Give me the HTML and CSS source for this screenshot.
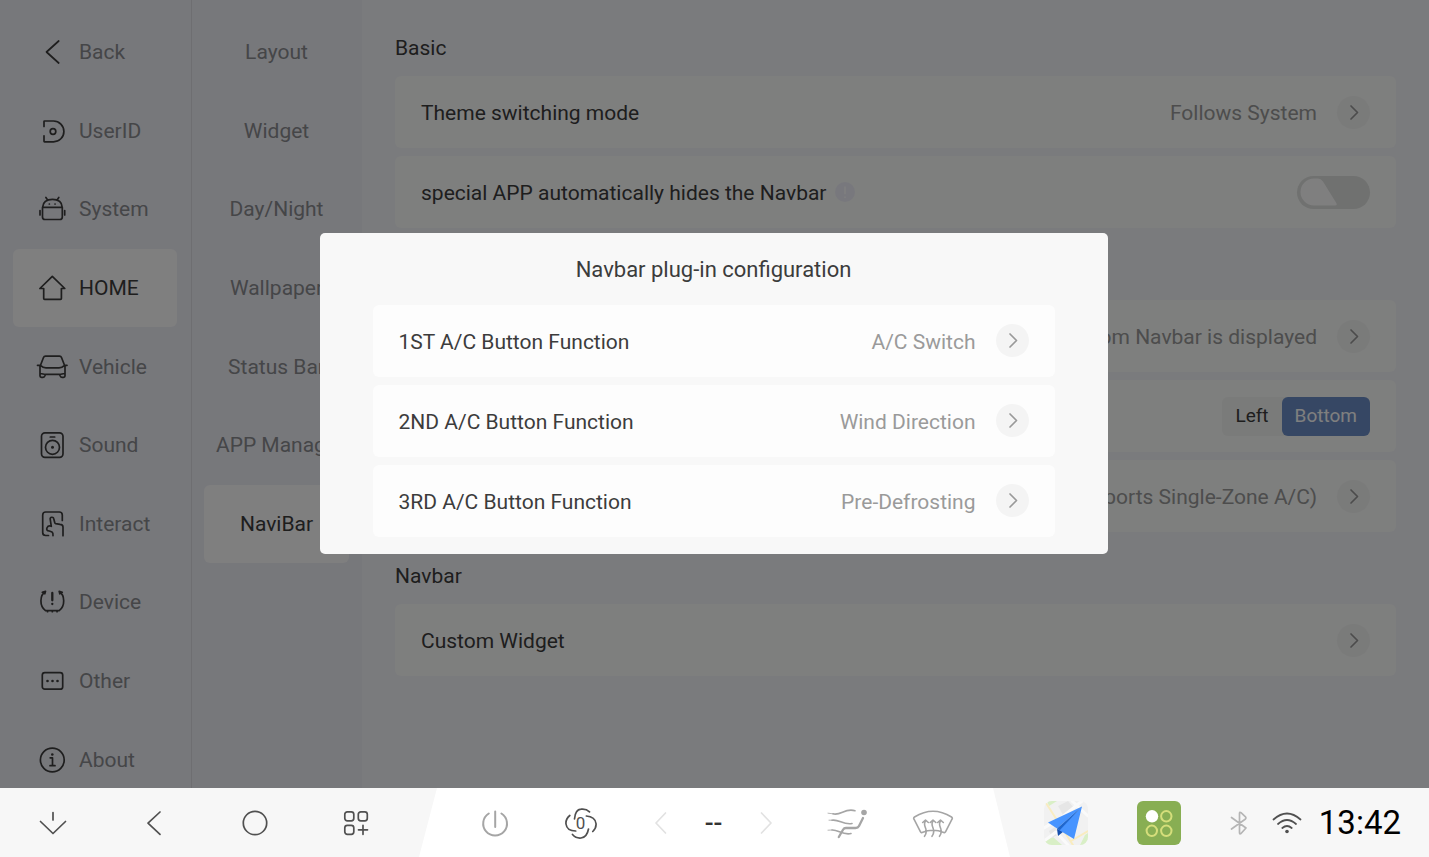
FILE: index.html
```
<!DOCTYPE html>
<html lang="en">
  <head>
    <meta charset="UTF-8" />
    <meta name="viewport" content="width=device-width, initial-scale=1.0" />
    <title>Settings</title>
    <link rel="stylesheet" href="styles.css">
  </head>
  <body>
    <div class="screen">
      <nav class="menu main-menu">
        <a class="item" href="#">
          <svg class="icon" viewBox="0 0 32 32"><path d="M22.7 5 10.5 16 22.7 27" /></svg>
          Back
        </a>
        <a class="item" href="#">
          <svg class="icon" viewBox="0 0 32 32"><path d="M8 11.500V6.500Q8 6 8.500 6H17.500a10.400 10.400 0 0 1 0 20.800H8.500Q8 26.800 8 26.300V20.800" /><circle cx="17" cy="16.500" r="2.800" /></svg>
          UserID
        </a>
        <a class="item" href="#">
          <svg class="icon" viewBox="0 0 32 32"><path d="M6.600 14.300C7 9 11 6.400 16.500 6.400S26 9 26.200 14.300M6.500 14.300H26.300V24a2.500 2.500 0 0 1-2.500 2.500H9A2.500 2.500 0 0 1 6.500 24ZM9.900 4.500 11.800 7.200M22.800 4.500 20.900 7.200M4 17.500V22M28.700 17.500V22" /><path d="M13.300 11h.1M19 11h.1" /></svg>
          System
        </a>
        <a class="item active" href="#">
          <svg class="icon" viewBox="0 0 32 32"><path d="M16.300 4.300 28.800 16.500H25.400V26.500Q25.400 27.400 24.500 27.400H8.600Q7.700 27.400 7.700 26.500V16.500H3.900Z" /></svg>
          HOME
        </a>
        <a class="item" href="#">
          <svg class="icon" viewBox="0 0 32 32"><path d="M1.500 14.300H4.500L7.500 6.500Q8 5.200 9.500 5.200H23.500Q25 5.200 25.500 6.500L28.500 14.300H31M4.500 14.300Q7 16.800 10 16.800H23Q26 16.800 28.500 14.300M4 15V25Q4 26.300 5.500 26.300H7Q8.500 26.300 9 24.500L9.500 23.300H23.500L24 24.500Q24.500 26.300 26 26.300H27.500Q29 26.300 29 25V15M4.500 22.500 9.500 23.500M28.500 22.500 23.500 23.500" /></svg>
          Vehicle
        </a>
        <a class="item" href="#">
          <svg class="icon" viewBox="0 0 32 32"><rect x="5.500" y="3.800" width="21.500" height="24.500" rx="3.500" /><circle cx="16.500" cy="18.300" r="7" /><path d="M14.300 8H18.700" /><circle class="dot" cx="16.500" cy="18.300" r="1.500" /></svg>
          Sound
        </a>
        <a class="item" href="#">
          <svg class="icon" viewBox="0 0 32 32"><path d="M26.300 12.500V7Q26.300 4 23.300 4H9.700Q6.700 4 6.700 7V24.500Q6.700 27.500 9.700 27.500H12.500M27 27.700V19Q27 16.500 24 16.300L19.700 15.600Q18.800 15.400 18.700 14.500L17.700 10.500C17.300 8.600 13.900 8.900 14.200 11.200L15.300 18.300Q12.200 17.200 11 19.800T13.300 23L16 24Q17.300 24.800 17 27.700" /></svg>
          Interact
        </a>
        <a class="item" href="#">
          <svg class="icon" viewBox="0 0 32 32"><path d="M9.500 5.300C3.600 9.500 3.200 19.800 9.500 24.700H23.200C29.400 19.800 29 9.500 23.200 5.300M6.300 6.200 9.500 5.300 8.800 7.800M26.300 6.200 23.200 5.300 23.800 7.800M11.500 25.700h.1M16.300 25.700h.1M21 25.700h.1" /><path class="bold" d="M16.300 7V14.300M16.300 17.800V18" /></svg>
          Device
        </a>
        <a class="item" href="#">
          <svg class="icon" viewBox="0 0 32 32"><rect x="6.300" y="7.600" width="20.400" height="16.600" rx="2.500" /><g class="dot"><circle cx="11.500" cy="16" r="1.300" /><circle cx="16.500" cy="16" r="1.300" /><circle cx="21.500" cy="16" r="1.300" /></g></svg>
          Other
        </a>
        <a class="item" href="#">
          <svg class="icon" viewBox="0 0 32 32"><circle cx="16.300" cy="16" r="11.900" /><path d="M14.200 13.800H16.500V21.500M14 21.700H19" /><circle class="dot" cx="16.300" cy="10.500" r="1.300" /></svg>
          About
        </a>
      </nav>

      <nav class="menu sub-menu">
        <a class="item" href="#">Layout</a>
        <a class="item" href="#">Widget</a>
        <a class="item" href="#">Day/Night</a>
        <a class="item" href="#">Wallpaper</a>
        <a class="item" href="#">Status Bar</a>
        <a class="item" href="#">APP Manage</a>
        <a class="item active" href="#">NaviBar</a>
      </nav>

      <main class="content">
        <h2>Basic</h2>
        <div class="rows">
          <div class="row">
            <span>Theme switching mode</span>
            <span class="value">Follows System</span>
            <button class="arrow" aria-label="Theme switching mode"><svg viewBox="0 0 33 33"><path d="M14 10 20.500 16.500 14 23" /></svg></button>
          </div>
          <div class="row">
            <label for="hide-navbar">special APP automatically hides the Navbar</label>
            <svg class="info" viewBox="0 0 20 20"><circle cx="10" cy="10" r="10" /><path d="M10 5V11.500M10 15V15.200" /></svg>
            <input class="toggle" type="checkbox" id="hide-navbar" />
          </div>
        </div>

        <div class="rows untitled">
          <div class="row">
            <span class="value">Bottom Navbar is displayed</span>
            <button class="arrow" aria-label="Navbar display"><svg viewBox="0 0 33 33"><path d="M14 10 20.500 16.500 14 23" /></svg></button>
          </div>
          <div class="row">
            <div class="segment">
              <button>Left</button>
              <button class="active">Bottom</button>
            </div>
          </div>
          <div class="row">
            <span class="value">(Supports Single-Zone A/C)</span>
            <button class="arrow" aria-label="Navbar plug-in"><svg viewBox="0 0 33 33"><path d="M14 10 20.500 16.500 14 23" /></svg></button>
          </div>
        </div>

        <h2>Navbar</h2>
        <div class="rows">
          <div class="row">
            <span>Custom Widget</span>
            <button class="arrow" aria-label="Custom Widget"><svg viewBox="0 0 33 33"><path d="M14 10 20.500 16.500 14 23" /></svg></button>
          </div>
        </div>
      </main>

      <div class="overlay">
        <div class="modal" role="dialog" aria-labelledby="modal-title">
          <h1 id="modal-title">Navbar plug-in configuration</h1>
          <div class="rows">
            <div class="row">
              <span>1ST A/C Button Function</span>
              <span class="value">A/C Switch</span>
              <button class="arrow" aria-label="1ST A/C Button Function"><svg viewBox="0 0 33 33"><path d="M14 10 20.500 16.500 14 23" /></svg></button>
            </div>
            <div class="row">
              <span>2ND A/C Button Function</span>
              <span class="value">Wind Direction</span>
              <button class="arrow" aria-label="2ND A/C Button Function"><svg viewBox="0 0 33 33"><path d="M14 10 20.500 16.500 14 23" /></svg></button>
            </div>
            <div class="row">
              <span>3RD A/C Button Function</span>
              <span class="value">Pre-Defrosting</span>
              <button class="arrow" aria-label="3RD A/C Button Function"><svg viewBox="0 0 33 33"><path d="M14 10 20.500 16.500 14 23" /></svg></button>
            </div>
          </div>
        </div>
      </div>
    </div>

    <footer class="navbar">
      <div class="keys">
        <button aria-label="Hide"><svg class="icon" viewBox="0 0 32 32"><path d="M16 5.500V13M3.500 14.500 16 26.500 28.500 14.500" /></svg></button>
        <button aria-label="Back"><svg class="icon" viewBox="0 0 32 32"><path d="M22 5 10 16.200 22 27.300" /></svg></button>
        <button aria-label="Home"><svg class="icon" viewBox="0 0 32 32"><circle cx="16" cy="16" r="11.700" /></svg></button>
        <button aria-label="Apps"><svg class="icon" viewBox="0 0 32 32"><rect x="4.800" y="4.800" width="9" height="9" rx="2.500" /><rect x="18.300" y="4.800" width="9" height="9" rx="2.500" /><rect x="4.800" y="18.300" width="9" height="9" rx="2.500" /><path d="M23 18.300V27.300M18.500 22.800H27.500" /></svg></button>
      </div>

      <div class="climate">
        <button class="gray" aria-label="A/C power"><svg class="icon" viewBox="0 0 32 32"><path d="M16.200 4.500V20M9.800 6.500A11.900 11.900 0 1 0 22.400 6.500" /></svg></button>
        <button class="fan" aria-label="Fan speed">
          <svg class="icon" viewBox="0 0 32 32"><path d="M9.500 12C10 5.500 12 2.500 16 2.200Q21 1.500 24.500 4.800M21.300 9C27.500 9.500 30.500 12.500 31 16.500Q31.500 21 27.800 24.500M23.500 22C22.500 27.500 20 30.500 16 31Q11 31.500 7.500 27.500M10.700 24C4.500 24 1.500 21 1 17Q.500 12 4.800 8.500" /></svg>
          <span>0</span>
        </button>
        <div class="stepper">
          <button aria-label="Decrease temperature"><svg class="icon" viewBox="0 0 32 32"><path d="M20.500 6 11 16 20.500 26" /></svg></button>
          <output>--</output>
          <button aria-label="Increase temperature"><svg class="icon" viewBox="0 0 32 32"><path d="M11.500 6 21 16 11.500 26" /></svg></button>
        </div>
        <button class="gray" aria-label="Wind direction"><svg class="wide-icon" viewBox="0 0 44 32"><path class="bold" d="M38 11 34 19Q33 21 30.500 21H21Q19 21 18 22.800L13.800 30" /><path class="mid" d="M8 6.800C16 9 20 .500 30 3.800M7 13.200C14 12 18 18 27 16.500M7 23C13 22.500 18 28.500 26 26.500" /><path class="thin" d="M3 6.200 8 6.800M4 13.200H7M3 23.200 7 23" /><circle class="dot" cx="39" cy="5.500" r="2.800" /></svg></button>
        <button class="gray" aria-label="Defrost"><svg class="wide-icon" viewBox="0 0 44 32"><path class="mid" d="M3 12.200Q2.200 11 3.500 10 22-1.500 40.500 10 41.800 11 41 12.200L34.500 24.800Q34 26 32.800 25.500 22 21 11 25.500 10 26 9.500 24.800ZM14.500 14C10.500 19.500 19 22 13.500 29.300M22 14C18 19.500 26.500 22 21 29.300M29.500 14C25.500 19.500 34 22 28.500 29.300M11.700 15.500 14.500 13 17.300 15.500M19.200 15.500 22 13 24.800 15.500M26.700 15.500 29.500 13 32.300 15.500" /></svg></button>
      </div>

      <div class="status">
        <button class="app" aria-label="Navigation">
          <svg viewBox="0 0 44 44">
            <clipPath id="map-clip"><rect width="44" height="44" rx="8" /></clipPath>
            <g clip-path="url(#map-clip)">
              <path fill="#f1f1f1" d="M0 0H44V44H0Z" />
              <path fill="#d9efc6" d="M3 0H13L5 5ZM0 40 9 36 18 44H0ZM41 34 44 32V44H36Z" />
              <path fill="#e6e6e6" d="M14 5 24 0 30 7 19 14ZM5 30 11 26 15 33 8 37Z" />
              <path fill="none" stroke="#fafafa" stroke-width="3" d="M0 27 17 17 38 0M0 40 12 31 24 44M28 0 44 15" />
              <path fill="none" stroke="#f9ecc0" stroke-width="2" d="M2 2 29 44M27 40 44 30" />
            </g>
            <path fill="#1750ad" d="M13 28 14 35 20 30Z" />
            <path fill="#4794ff" d="M38 5.500 4 21.500 13 27.500ZM38 5.500 15 29 30 38Z" />
            <path fill="#1f67cf" d="M38 5.500 13 27.500 15.500 29.500Z" />
          </svg>
        </button>
        <button class="app" aria-label="All apps">
          <svg viewBox="0 0 44 44">
            <rect width="44" height="44" rx="6" fill="#88ae53" />
            <g fill="none" stroke="#d5de7b" stroke-width="2"><circle cx="29.300" cy="15.300" r="5.200" /><circle cx="14.800" cy="29.800" r="5.200" /><circle cx="29.300" cy="29.800" r="5.200" /></g>
            <circle cx="15" cy="15.300" r="6.200" fill="#ffffff" />
          </svg>
        </button>
        <svg class="bluetooth" viewBox="0 0 18 26"><path d="M1.500 7.500 16 18 11 23.500Q9.500 24.500 9.500 22.500V3.500Q9.500 1.500 11 2.700L15.500 6.800Q16.500 8 15.500 9L1.500 19" /></svg>
        <svg class="wifi" viewBox="0 0 30 24"><path d="M1.500 8.500Q15-3.500 28.500 8.500M6 13Q15 5 24 13M10.300 17Q15 13 19.700 17" /><circle class="dot" cx="15" cy="20.500" r="1.800" /></svg>
        <time>13:42</time>
      </div>
    </footer>
  </body>
</html>
```
FILE: styles.css
```
* {
  box-sizing: border-box;
}

body {
  margin: 0;
  height: 100vh;
  display: flex;
  flex-direction: column;
  overflow: hidden;
  font-family: Roboto, "Liberation Sans", sans-serif;
  font-size: 21px;
  line-height: 28px;
  color: #3c3c3c;
}

h1,
h2 {
  margin: 0;
  font-weight: 400;
}

button {
  padding: 0;
  border: 0;
  background: none;
  font: inherit;
  color: inherit;
  cursor: pointer;
}

svg {
  display: block;
  flex: none;
  fill: none;
  stroke: currentColor;
  stroke-width: 1.7;
  stroke-linecap: round;
  stroke-linejoin: round;
}

.dot {
  fill: currentColor;
  stroke: none;
}

.bold {
  stroke-width: 2.3;
}

.icon {
  width: 32px;
  height: 32px;
}

.screen {
  position: relative;
  flex: 1;
  min-height: 0;
  display: flex;
  overflow: hidden;
  background-color: #f5f6fa;
}

/* side menus */
.menu {
  display: grid;
  grid-template-rows: repeat(10, 1fr);
  flex: none;
  padding-top: 13px;
  margin-bottom: -11px;
  background-color: #eff0f7;
}

.main-menu {
  width: 192px;
  padding-left: 13px;
  padding-right: 14px;
  border-right: 1px solid #dcdde2;
}

.sub-menu {
  width: 170px;
  padding-left: 12px;
  padding-right: 13px;
}

.item {
  display: flex;
  align-items: center;
  border-radius: 6px;
  color: #8b8c90;
  text-decoration: none;
  white-space: nowrap;
}

.main-menu .item {
  gap: 11px;
  padding-left: 23px;
}

.sub-menu .item {
  justify-content: center;
}

.item .icon {
  color: #3c3c3c;
}

.item.active {
  background-color: #fefefe;
  color: #3c3c3c;
}

/* settings */
.content {
  flex: 1;
  padding: 4px 33px 0;
}

.content h2 {
  padding: 30px 0 14px;
  font-size: 21px;
  line-height: 28px;
}

.rows {
  display: flex;
  flex-direction: column;
  gap: 8px;
}

.rows.untitled {
  margin-top: 72px;
}

.row {
  display: flex;
  align-items: center;
  min-height: 72px;
  padding: 0 26px;
  border-radius: 6px;
  background-color: #fcfefc;
}

.row > span,
.row > label {
  padding-top: 2px;
}

.value {
  margin-left: auto;
  color: #9a9a9a;
}

.arrow {
  width: 33px;
  height: 33px;
  margin-left: auto;
  border-radius: 50%;
  background-color: #f4f4f4;
  color: #999;
}

.content .arrow {
  background-color: #f5f6f5;
}

.value + .arrow {
  margin-left: 20px;
}

.info {
  width: 20px;
  height: 20px;
  margin-left: 9px;
  color: #fff;
}

.info circle {
  fill: #f1f1fb;
  stroke: none;
}

.toggle {
  appearance: none;
  width: 73px;
  height: 33px;
  margin: 0 0 0 auto;
  border-radius: 17px;
  background-color: #e0e2e0;
  cursor: pointer;
}

.toggle::before {
  content: "";
  display: block;
  height: 33px;
  background-color: #fefefe;
  clip-path: path("M17 3H21Q24 3 26 6L39 27Q41 30 38 30H17A13.5 13.5 0 0 1 17 3Z");
}

.segment {
  display: flex;
  margin-left: auto;
  border-radius: 6px;
  background-color: #f5f6f5;
  font-size: 19px;
}

.segment button {
  height: 39px;
  padding: 0 13px;
  border-radius: 6px;
}

.segment .active {
  background-color: #6c8fc8;
  color: #fff;
}

/* dialog */
.overlay {
  position: absolute;
  inset: 0;
  display: flex;
  align-items: center;
  justify-content: center;
  padding: 0 2px 2px 0;
  background-color: rgba(0, 0, 0, 0.5);
}

.modal {
  width: 788px;
  max-width: 90%;
  padding: 23px 53px 17px;
  border-radius: 5px;
  background-color: #f8f8f8;
}

.modal h1 {
  margin-bottom: 21px;
  font-size: 22px;
  line-height: 28px;
  text-align: center;
}

.modal .row {
  background-color: #fdfdfd;
}

/* bottom bar */
.navbar {
  display: grid;
  grid-template-columns: 419fr 591fr 419fr;
  height: 69px;
  background-color: #f7f7f7;
  color: #505050;
}

.navbar button {
  display: flex;
  align-items: center;
  justify-content: center;
}

.keys {
  display: flex;
  padding: 0 12px 0 2px;
}

.keys button {
  flex: 1;
}

.climate {
  display: flex;
  justify-content: center;
  padding-right: 2px;
  background-color: #fff;
  clip-path: polygon(18px 0, calc(100% - 17px) 0, 100% 100%, 0 100%);
}

.climate > button {
  width: 86px;
}

.navbar .gray {
  color: #a5a5a5;
}

.gray svg {
  stroke-width: 2;
}

.wide-icon {
  width: 44px;
  height: 32px;
}

.wide-icon .thin {
  stroke-width: 0.8;
}

.wide-icon .mid {
  stroke-width: 1.6;
}

.navbar .fan {
  display: grid;
  place-content: center;
  place-items: center;
}

.fan svg,
.fan span {
  grid-area: 1 / 1;
}

.fan span {
  font-size: 17px;
  line-height: 20px;
}

.stepper {
  display: flex;
  align-items: center;
  width: 180px;
  padding: 0 11px;
}

.stepper > * {
  flex: 1;
}

.stepper button {
  color: #e2e2e2;
}

.stepper output {
  color: #333;
  font-size: 26px;
  font-weight: 500;
  text-align: center;
}

.status {
  display: flex;
  align-items: center;
  justify-content: flex-end;
  padding-right: 28px;
}

.app {
  width: 44px;
  margin-right: 49px;
}

.app svg {
  width: 44px;
  height: 44px;
  stroke: none;
}

.bluetooth {
  width: 18px;
  height: 26px;
  margin-right: 24px;
  color: #b5b5b5;
}

.wifi {
  width: 30px;
  height: 24px;
  margin-right: 17px;
}

.status time {
  color: #000;
  font-size: 33px;
}
```
